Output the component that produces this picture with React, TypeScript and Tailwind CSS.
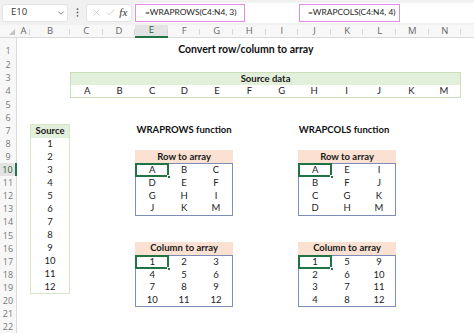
import React from 'react';
import { ChevronDown, X, Check } from 'lucide-react';

const colLetters = ['A','B','C','D','E','F','G','H','I','J','K','L','M','N',''];
const srcData = ['A','B','C','D','E','F','G','H','I','J','K','M'];

function Table({ col, row, title, data }: { col: 'E' | 'J'; row: 'top' | 'bottom'; title: string; data: string[][] }) {
  const headCls =
    (col === 'E' ? 'col-start-6 ' : 'col-start-11 ') +
    (row === 'top' ? 'row-start-10 ' : 'row-start-17 ');
  const bodyCls =
    (col === 'E' ? 'col-start-6 ' : 'col-start-11 ') +
    (row === 'top' ? 'row-start-11 ' : 'row-start-18 ');
  return (
    <>
      <div className={headCls + 'col-span-3 bg-[#fbe1d2] flex items-center justify-center font-bold text-[9.5px] text-[#1a1a1a]'}>
        {title}
      </div>
      <div className={bodyCls + 'col-span-3 row-span-4 border border-[#7f8cb8] grid grid-cols-3 grid-rows-4 relative'}>
        {data.flat().map((v, i) => (
          <div key={i} className="flex items-center justify-center text-[9.5px] text-[#222]">
            {v}
          </div>
        ))}
        <div className="absolute left-[-1px] top-[-1px] w-[33.6px] h-[14.1px] border-2 border-[#217346]" />
        <div className="absolute left-[30.5px] top-[11px] w-[4px] h-[4px] bg-[#217346] border border-white" />
      </div>
    </>
  );
}

export default function App() {
  return (
    <div className="w-[474px] h-[334px] overflow-hidden bg-white" style={{ fontFamily: 'Lato, "Open Sans", sans-serif' }}>
      {/* Formula bar */}
      <div className="h-[25px] bg-[#f1f1f1] flex items-center relative">
        <div className="shrink-0 ml-[2px] w-[66px] h-[18px] bg-white border border-[#e3e3e3] rounded-[3px] flex items-center justify-between pl-[8px] pr-[1px] text-[9.5px] text-[#333]" style={{ fontFamily: '"Open Sans", sans-serif' }}>
          <span>E10</span>
          <ChevronDown size={10} strokeWidth={1.6} className="text-[#444]" />
        </div>
        <div className="shrink-0 w-[18px] flex justify-center">
          <svg width="3" height="9" viewBox="0 0 3 9">
            <circle cx="1.5" cy="1.2" r="0.9" fill="#666" />
            <circle cx="1.5" cy="4.5" r="0.9" fill="#666" />
            <circle cx="1.5" cy="7.8" r="0.9" fill="#666" />
          </svg>
        </div>
        <div className="shrink-0 w-[46px] h-[18px] bg-white border border-[#e3e3e3] rounded-[3px] flex items-center justify-around px-[2px]">
          <X size={11} strokeWidth={1.2} className="text-[#b0b0b0]" />
          <Check size={11} strokeWidth={1.2} className="text-[#b0b0b0]" />
          <span className="italic text-[11px] text-[#333] leading-none" style={{ fontFamily: '"Liberation Serif", serif' }}>fx</span>
        </div>
        <div className="ml-[2px] flex-1 min-w-0 h-[20px] bg-white flex items-center relative">
          <div className="shrink-0 ml-[1px] w-[110px] h-[18px] border border-[#e38be3] flex items-center pl-[9px] text-[8.4px] text-[#222] whitespace-nowrap">
            =WRAPROWS(C4:N4, 3)
          </div>
          <div className="shrink-0 ml-[54px] w-[101px] h-[18px] border border-[#e38be3] flex items-center pl-[8px] text-[8.4px] text-[#222] whitespace-nowrap">
            =WRAPCOLS(C4:N4, 4)
          </div>
        </div>
      </div>

      {/* Sheet grid */}
      <div className="grid grid-cols-[17px_13px_40px_repeat(13,32.6px)] grid-rows-[13px_20.5px_repeat(21,13.1px)]">
        {/* corner */}
        <div className="col-start-1 row-start-1 bg-[#f7f7f7] border-b border-[#dadada] flex items-end justify-end pr-[2px] pb-[2px]">
          <svg width="6" height="6" viewBox="0 0 6 6"><polygon points="6,0 6,6 0,6" fill="#c4c4c4" /></svg>
        </div>
        {/* column headers */}
        {colLetters.map((c, i) => (
          <div
            key={i}
            className={
              'row-start-1 flex items-center justify-center text-[9.5px] relative ' +
              (c === 'E'
                ? 'bg-[#e3e3e3] text-[#1f5f3a] border-b-2 border-[#217346]'
                : 'bg-[#f7f7f7] text-[#666] border-b border-[#dadada]')
            }
            style={{ gridColumnStart: i + 2, fontFamily: '"Open Sans", sans-serif' }}
          >
            {c}
            <span className="absolute right-0 top-[4px] h-[6px] w-px bg-[#d6d6d6]" />
          </div>
        ))}
        {/* row headers */}
        {Array.from({ length: 22 }, (_, i) => i + 1).map((r) => (
          <div
            key={r}
            className={
              'col-start-1 flex justify-center text-[9px] ' +
              (r === 1 ? 'items-end pb-[1px] ' : 'items-center ') +
              (r === 10
                ? 'bg-[#e3e3e3] text-[#1f5f3a] border-r-2 border-[#217346]'
                : 'bg-[#f7f7f7] text-[#777] border-r border-[#dadada]')
            }
            style={{ gridRowStart: r + 1, fontFamily: '"Open Sans", sans-serif' }}
          >
            {r}
          </div>
        ))}

        {/* Title */}
        <div className="col-start-6 col-span-8 row-start-2 flex items-end pb-[1px] pl-[43px] font-bold text-[10.5px] text-[#111] whitespace-nowrap">
          Convert row/column to array
        </div>

        {/* Source data */}
        <div className="col-start-4 col-span-12 row-start-4 row-span-2 border border-[#c9dfba] grid grid-cols-12 grid-rows-2">
          <div className="col-span-12 bg-[#e2efda] flex items-center justify-center font-bold text-[9.5px] text-[#1a1a1a]">
            Source data
          </div>
          {srcData.map((v) => (
            <div key={v} className="flex items-center justify-center text-[9.5px] text-[#222]">{v}</div>
          ))}
        </div>

        {/* Source column */}
        <div className="col-start-3 row-start-8 row-span-13 border border-[#d5e6c9] grid grid-rows-13">
          <div className="bg-[#e2efda] flex items-center justify-center font-bold text-[9.5px] text-[#1a1a1a]">Source</div>
          {Array.from({ length: 12 }, (_, i) => i + 1).map((n) => (
            <div key={n} className="flex items-center justify-center text-[9.5px] text-[#222]">{n}</div>
          ))}
        </div>

        {/* Function labels */}
        <div className="col-start-6 col-span-3 row-start-8 flex items-center justify-center font-bold text-[9.5px] text-[#111] whitespace-nowrap">
          WRAPROWS function
        </div>
        <div className="col-start-11 col-span-3 row-start-8 flex items-center justify-center pr-[6px] font-bold text-[9.5px] text-[#111] whitespace-nowrap">
          WRAPCOLS function
        </div>

        <Table col="E" row="top" title="Row to array" data={[['A','B','C'],['D','E','F'],['G','H','I'],['J','K','M']]} />
        <Table col="J" row="top" title="Row to array" data={[['A','E','I'],['B','F','J'],['C','G','K'],['D','H','M']]} />
        <Table col="E" row="bottom" title="Column to array" data={[['1','2','3'],['4','5','6'],['7','8','9'],['10','11','12']]} />
        <Table col="J" row="bottom" title="Column to array" data={[['1','5','9'],['2','6','10'],['3','7','11'],['4','8','12']]} />
      </div>
    </div>
  );
}
